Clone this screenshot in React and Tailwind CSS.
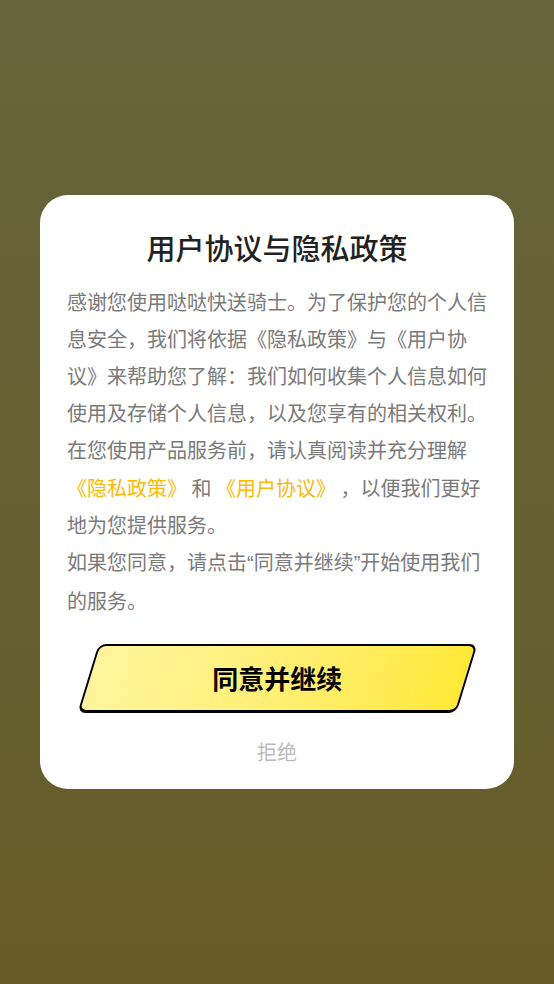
export default function App() {
    return (
        <div
            className="min-h-screen w-full flex items-center justify-center bg-gradient-to-b from-[#67643b] to-[#655c28] px-[40px]"
            style={{ fontFamily: '"Noto Sans CJK SC", "Noto Sans", sans-serif' }}
        >
            <div className="w-full bg-white rounded-[28px] pt-[34px] pb-[23px] px-[27px]">
                {/* Title */}
                <h1 className="text-center text-[29px] leading-[36px] font-medium text-[#222222]">
                    用户协议与隐私政策
                </h1>

                {/* Body */}
                <div className="mt-[18px] text-[20px] leading-[37.1px] text-[#7a7a7a]">
                    <p>
                        感谢您使用哒哒快送骑士。为了保护您的个人信息安全，我们将依据《隐私政策》与《用户协议》来帮助您了解：我们如何收集个人信息如何使用及存储个人信息，以及您享有的相关权利。
                    </p>
                    <p>
                        在您使用产品服务前，请认真阅读并充分理解 <span className="text-[#fbb90a]">《隐私政策》</span> 和{" "}
                        <span className="text-[#fbb90a]">《用户协议》</span> ，以便我们更好地为您提供服务。
                    </p>
                    <p>
                        如果您同意，请点击<span className="font-['Liberation_Sans']">“</span>同意并继续
                        <span className="font-['Liberation_Sans']">”</span>开始使用我们的服务。
                    </p>
                </div>

                {/* Agree button */}
                <div className="mt-[25px] flex justify-center">
                    <button className="w-[379px] h-[69px] -skew-x-[17deg] rounded-[8px] border-2 border-b-[3px] border-black bg-gradient-to-r from-[#fff59d] to-[#ffe935] flex items-center justify-center">
                        <span className="skew-x-[17deg] text-[26px] font-bold text-black leading-none">
                            同意并继续
                        </span>
                    </button>
                </div>

                {/* Refuse */}
                <div className="mt-[25px] text-center text-[20px] leading-[28px] text-[#bbbbbb]">
                    拒绝
                </div>
            </div>
        </div>
    )
}
